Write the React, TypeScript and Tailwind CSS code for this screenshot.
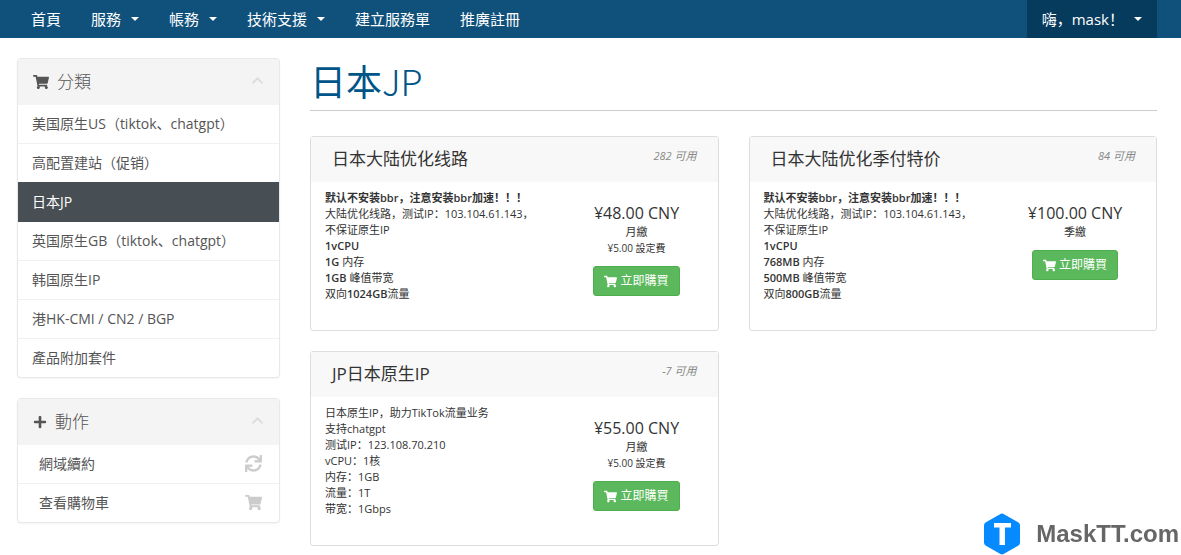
import React from "react";
import { FaChevronUp, FaPlus, FaShoppingCart, FaSync } from "react-icons/fa";

const navItems = [
  { label: "首頁", menu: false },
  { label: "服務", menu: true },
  { label: "帳務", menu: true },
  { label: "技術支援", menu: true },
  { label: "建立服務單", menu: false },
  { label: "推廣註冊", menu: false },
];

const categories = [
  "美国原生US（tiktok、chatgpt）",
  "高配置建站（促销）",
  "日本JP",
  "英国原生GB（tiktok、chatgpt）",
  "韩国原生IP",
  "港HK-CMI / CN2 / BGP",
  "產品附加套件",
];

interface Product {
  name: string;
  stock: string;
  lines: React.ReactNode[];
  price: string;
  cycle: string;
  setup?: string;
}

const S = ({ children }: { children: React.ReactNode }) => (
  <strong className="font-semibold">{children}</strong>
);

const notice = <S>默认不安装bbr，注意安装bbr加速！！！</S>;

const products: Product[] = [
  {
    name: "日本大陆优化线路",
    stock: "282 可用",
    lines: [
      notice,
      "大陆优化线路，测试IP：103.104.61.143，",
      "不保证原生IP",
      <S>1vCPU</S>,
      <><S>1G</S> 内存</>,
      <><S>1GB</S> 峰值带宽</>,
      <>双向<S>1024GB</S>流量</>,
    ],
    price: "¥48.00 CNY",
    cycle: "月繳",
    setup: "¥5.00 設定費",
  },
  {
    name: "日本大陆优化季付特价",
    stock: "84 可用",
    lines: [
      notice,
      "大陆优化线路，测试IP：103.104.61.143，",
      "不保证原生IP",
      <S>1vCPU</S>,
      <><S>768MB</S> 内存</>,
      <><S>500MB</S> 峰值带宽</>,
      <>双向<S>800GB</S>流量</>,
    ],
    price: "¥100.00 CNY",
    cycle: "季繳",
  },
  {
    name: "JP日本原生IP",
    stock: "-7 可用",
    lines: [
      "日本原生IP，助力TikTok流量业务",
      "支持chatgpt",
      "测试IP：123.108.70.210",
      "vCPU：1核",
      "内存：1GB",
      "流量：1T",
      "带宽：1Gbps",
    ],
    price: "¥55.00 CNY",
    cycle: "月繳",
    setup: "¥5.00 設定費",
  },
];

const Caret = () => (
  <span className="border-x-4 border-t-4 border-x-transparent border-t-white" />
);

function Panel({ icon, title, children }: { icon: React.ReactNode; title: string; children: React.ReactNode }) {
  return (
    <section className="overflow-hidden rounded border border-[#e8e8e8] bg-white shadow-xs">
      <header className="flex h-[46px] items-center gap-2 bg-[#f4f4f4] px-[15px] text-[17px] text-[#555]">
        {icon}
        <h2 className="flex-1 font-light">{title}</h2>
        <button type="button" aria-label={`收合${title}`} className="mb-1 text-[13px] text-[#ddd]">
          <FaChevronUp />
        </button>
      </header>
      <ul className="divide-y divide-[#f1f1f1] text-[14px] text-[#555]">{children}</ul>
    </section>
  );
}

function ProductCard({ product }: { product: Product }) {
  return (
    <article className="min-h-[195px] rounded-[3px] border border-[#ddd] bg-white text-[11px] leading-4 text-[#333]">
      <header className="flex h-[45px] justify-between bg-[#f8f8f8] px-[21px]">
        <h2 className="pt-2.5 text-[17px] leading-6">{product.name}</h2>
        <em className="pt-[11px] text-[#888]">{product.stock}</em>
      </header>
      <div className="flex pt-2 pr-5 pl-3.5">
        <div className="flex-1">
          {product.lines.map((line, i) => (
            <p key={i}>{line}</p>
          ))}
        </div>
        <div className="flex w-[122px] flex-col items-center pt-3">
          <span className="text-[16px] leading-[22px]">{product.price}</span>
          <span>{product.cycle}</span>
          {product.setup && <span className="text-[10px]">{product.setup}</span>}
          <button
            type="button"
            className="mt-2.5 flex h-[30px] items-center gap-[3px] rounded-[3px] border border-[#4cae4c] bg-[#5cb85c] px-2.5 text-[12px] text-white"
          >
            <FaShoppingCart className="text-[13px]" />
            立即購買
          </button>
        </div>
      </div>
    </article>
  );
}

export default function App() {
  return (
    <div className="min-h-screen bg-white font-['Open_Sans','Noto_Sans_CJK_SC',sans-serif]">
      <nav className="flex h-[38px] justify-between bg-[#10517b] pr-6 pl-4 text-[15px] text-white">
        <ul className="flex">
          {navItems.map((item) => (
            <li key={item.label} className="flex">
              <a href="#" className="flex items-center gap-2.5 px-[15px]">
                {item.label}
                {item.menu && <Caret />}
              </a>
            </li>
          ))}
        </ul>
        <button type="button" className="flex items-center gap-2.5 bg-[#063b5e] px-[15px]">
          嗨，mask！
          <Caret />
        </button>
      </nav>

      <div className="flex gap-[30px] pt-5 pr-6 pb-2 pl-[17px]">
        <aside className="flex w-[263px] shrink-0 flex-col gap-5">
          <Panel icon={<FaShoppingCart className="text-[16px]" />} title="分類">
            {categories.map((name) => (
              <li key={name}>
                <a
                  href="#"
                  className={
                    name === "日本JP"
                      ? "-my-px flex h-10 items-center bg-[#484f54] px-3.5 pb-0.5 text-white"
                      : "flex h-[38px] items-center px-3.5 pb-0.5"
                  }
                >
                  {name}
                </a>
              </li>
            ))}
          </Panel>
          <Panel icon={<FaPlus className="text-[14px]" />} title="動作">
            <li>
              <a href="#" className="flex h-[38px] items-center justify-between pr-[17px] pb-0.5 pl-[21px]">
                網域續約
                <FaSync className="text-[17px] text-[#ccc]" />
              </a>
            </li>
            <li>
              <a href="#" className="flex h-[38px] items-center justify-between pr-[17px] pb-0.5 pl-[21px]">
                查看購物車
                <FaShoppingCart className="text-[17px] text-[#ccc]" />
              </a>
            </li>
          </Panel>
        </aside>

        <main className="min-w-0 flex-1">
          <h1 className="mb-[25px] border-b border-[#ccc] pb-2 font-['Noto_Sans_CJK_SC',sans-serif] text-[36px] leading-[44px] font-normal text-[#058]">
            日本<span className="font-light">JP</span>
          </h1>
          <div className="grid grid-cols-2 gap-x-[30px] gap-y-5">
            {products.map((p) => (
              <ProductCard key={p.name} product={p} />
            ))}
          </div>
        </main>
      </div>

      <div className="fixed right-0 bottom-0 flex items-center gap-4 pr-0.5 font-['Liberation_Sans',sans-serif] text-[24px] font-bold text-[#666]">
        <svg viewBox="0 0 36 42" className="h-[42px] w-9" aria-hidden="true">
          <path
            d="M16 1.2Q18 0 20 1.2L34.5 9.5Q36 10.5 36 12.5V29.5Q36 31.5 34.5 32.5L20 40.8Q18 42 16 40.8L1.5 32.5Q0 31.5 0 29.5V12.5Q0 10.5 1.5 9.5Z"
            fill="#058aff"
          />
          <path d="M10 10H27V14.5H21V32H15.5V14.5H10Z" fill="#fff" />
        </svg>
        <span>MaskTT.com</span>
      </div>
    </div>
  );
}
